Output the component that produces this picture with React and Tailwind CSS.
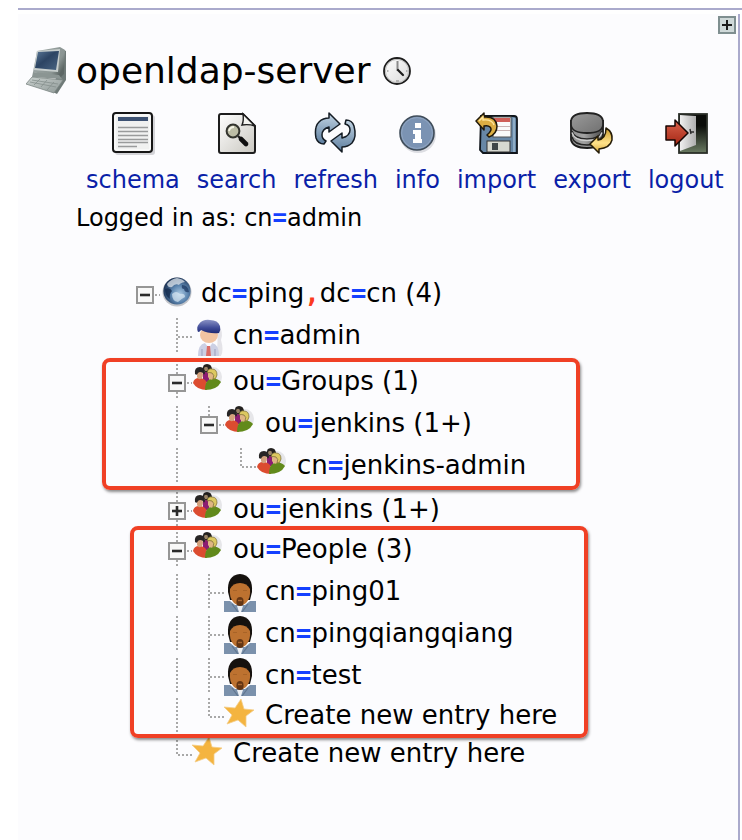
import React from "react";

const LINE = "#a8a8a8";

function ComputerIcon() {
  return (
    <svg width="44" height="50" viewBox="0 0 44 50" aria-hidden="true">
      <defs>
        <linearGradient id="pcScreen" x1="0" y1="0" x2="1" y2="1">
          <stop offset="0" stopColor="#5b7898" />
          <stop offset="0.45" stopColor="#2c4463" />
          <stop offset="1" stopColor="#4a6583" />
        </linearGradient>
        <linearGradient id="pcCase" x1="0" y1="0" x2="1" y2="0.6">
          <stop offset="0" stopColor="#a4adac" />
          <stop offset="0.8" stopColor="#8a9492" />
          <stop offset="1" stopColor="#5d6765" />
        </linearGradient>
        <linearGradient id="pcBase" x1="0" y1="0" x2="1" y2="1">
          <stop offset="0" stopColor="#c9d0ce" />
          <stop offset="1" stopColor="#909a98" />
        </linearGradient>
      </defs>
      <path d="M36 3 L40 5 L40 34 L31 48 L27 46 Z" fill="#6f7a78" />
      <path d="M11 5 L34 1 L39 4 L38 28 L34 32 L7 26 Z" fill="url(#pcCase)" />
      <path d="M11 5 L34 3 L32 26 L8 24 Z" fill="#c7cecd" />
      <path d="M12 6 L33 5 L30 24 L9 22 Z" fill="url(#pcScreen)" />
      <path d="M7 26 L33 29 L36 33 L6 31 Z" fill="#8b9593" />
      <path d="M6 31 L37 34 L28 47 L0 38 Z" fill="url(#pcBase)" stroke="#7c8684" strokeWidth="0.8" />
      <path d="M6 34 L32 38 M4 36 L30 41 M14 33 L8 39 M21 34 L15 41 M28 36 L21 44" stroke="#858f8d" strokeWidth="0.8" fill="none" />
    </svg>
  );
}

function ClockIcon() {
  return (
    <svg width="28" height="28" viewBox="0 0 28 28" className="block" aria-hidden="true">
      <defs>
        <linearGradient id="clockFace" x1="0" y1="0" x2="1" y2="1">
          <stop offset="0" stopColor="#ffffff" />
          <stop offset="1" stopColor="#d9d9d9" />
        </linearGradient>
      </defs>
      <circle cx="14" cy="14" r="13" fill="url(#clockFace)" stroke="#1d1d1d" strokeWidth="1.8" />
      <circle cx="14" cy="14" r="11.6" fill="none" stroke="#bdbdbd" strokeWidth="1" />
      <path d="M14.5 14 V4" stroke="#8b8b8b" strokeWidth="2" />
      <path d="M15 13 L20 18" stroke="#1c1c1c" strokeWidth="2.2" strokeLinecap="round" />
      <path d="M4 14h1.5 M23 14h1.5 M13 24h3" stroke="#b3b3b3" strokeWidth="2" />
    </svg>
  );
}

function SchemaIcon() {
  return (
    <svg width="44" height="44" viewBox="0 0 44 44" aria-hidden="true">
      <rect x="4" y="3" width="40" height="40" rx="3" fill="#d4d4d8" />
      <rect x="2" y="1" width="39" height="39" rx="3" fill="#f0f1f0" stroke="#161616" strokeWidth="2" />
      <rect x="4" y="3" width="35" height="35" rx="1" fill="none" stroke="#ffffff" strokeWidth="1" />
      <rect x="7" y="5" width="30" height="4" fill="#3d5273" />
      <path d="M7 15.5h30M7 19.5h30M7 23.5h30M7 27.5h30M7 30.5h30M7 34.5h19" stroke="#999b9b" strokeWidth="1.6" />
    </svg>
  );
}

function SearchIcon() {
  return (
    <svg width="44" height="44" viewBox="0 0 44 44" aria-hidden="true">
      <defs>
        <linearGradient id="paper" x1="0" y1="0" x2="1" y2="1">
          <stop offset="0" stopColor="#ffffff" />
          <stop offset="1" stopColor="#c9c7c0" />
        </linearGradient>
      </defs>
      <path d="M4 4 Q4 2 6 2 L28 2 L40 14 L40 39 Q40 41 38 41 L6 41 Q4 41 4 39 Z" fill="url(#paper)" stroke="#1d1d1d" strokeWidth="2" />
      <path d="M28 2 Q29 9 27 13 Q34 12 40 14 Z" fill="#f4f4f0" stroke="#1d1d1d" strokeWidth="1.4" />
      <path d="M23 24 L25 26" stroke="#222" strokeWidth="2.4" />
      <path d="M26 27 L31 32" stroke="#0f0f0f" strokeWidth="4.6" strokeLinecap="round" />
      <circle cx="18" cy="19" r="6.4" fill="#bcbda6" stroke="#33342e" strokeWidth="2" />
      <path d="M14 19 Q15 15 19 15" stroke="#f4f4e6" strokeWidth="1.8" fill="none" />
    </svg>
  );
}

function RefreshIcon() {
  return (
    <svg width="44" height="44" viewBox="0 0 44 44" aria-hidden="true">
      <defs>
        <linearGradient id="arrowBlue" x1="0" y1="0" x2="0" y2="1">
          <stop offset="0" stopColor="#c3d5e4" />
          <stop offset="1" stopColor="#5c7d9e" />
        </linearGradient>
      </defs>
      <g fill="url(#arrowBlue)" stroke="#141c24" strokeWidth="1.5" strokeLinejoin="round">
        <path d="M15 1 L26 12 L15 20 L15 15 Q8 17 8 23 Q8 27 12 29 L10 32 Q4 32 2 26 Q0 15 5 10 Q9 6 15 6 Z" />
        <path d="M28 40 L17 29 L28 21 L28 26 Q36 24 36 18 Q36 13 31 12 L32 8 Q38 8 40 14 Q43 25 38 31 Q34 35 28 35 Z" />
      </g>
    </svg>
  );
}

function InfoIcon() {
  return (
    <svg width="44" height="44" viewBox="0 0 44 44" aria-hidden="true">
      <circle cx="23" cy="23" r="18" fill="#dcdde2" />
      <circle cx="22" cy="21" r="17" fill="#7b93b3" stroke="#3f4c59" strokeWidth="1.6" />
      <circle cx="22" cy="21" r="15.4" fill="none" stroke="#90a5c1" strokeWidth="1" />
      <path d="M20 11h6v5h-6z M18 18h8v9h1v4h-9v-4h2v-5h-2z" fill="#fff" />
    </svg>
  );
}

function ImportIcon() {
  return (
    <svg width="44" height="44" viewBox="0 0 44 44" aria-hidden="true">
      <path d="M6 4 H39 Q42 4 42 7 V41 H8 L5 38 Z" fill="#6787a6" stroke="#10151b" strokeWidth="1.8" />
      <path d="M39 6 V40" stroke="#8fadc6" strokeWidth="2" />
      <rect x="18" y="5" width="18" height="20" fill="#fafafa" stroke="#555" strokeWidth="1" />
      <rect x="19" y="6" width="16" height="4" fill="#cf5f58" />
      <path d="M19 14.5h16M19 18.5h16" stroke="#c8b4b4" strokeWidth="1" />
      <rect x="12" y="29" width="23" height="11" fill="#d6d8d0" stroke="#333" strokeWidth="1" />
      <rect x="17" y="31" width="6" height="7" fill="#3f4648" />
      <path d="M1 9 L9 1 V5 Q21 4 22 14 Q22 22 14 25 L12 23 Q18 18 15 15 Q13 13 9 14 V18 Z" fill="#dcae43" stroke="#20190a" strokeWidth="1.5" strokeLinejoin="round" />
      <path d="M4 9 L8 5 V8 Q17 7 19 13" stroke="#ffe7a0" strokeWidth="1.4" fill="none" />
    </svg>
  );
}

function ExportIcon() {
  return (
    <svg width="44" height="44" viewBox="0 0 44 44" aria-hidden="true">
      <defs>
        <linearGradient id="drum" x1="0" y1="0" x2="1" y2="0">
          <stop offset="0" stopColor="#8f8f8f" />
          <stop offset="0.4" stopColor="#a3a3a3" />
          <stop offset="1" stopColor="#474747" />
        </linearGradient>
        <linearGradient id="drumTop" x1="0" y1="0" x2="1" y2="1">
          <stop offset="0" stopColor="#9b9b9b" />
          <stop offset="1" stopColor="#707070" />
        </linearGradient>
        <linearGradient id="gold" x1="0" y1="0" x2="0" y2="1">
          <stop offset="0" stopColor="#c99a2c" />
          <stop offset="0.6" stopColor="#ffe28a" />
          <stop offset="1" stopColor="#d9a93a" />
        </linearGradient>
      </defs>
      <path d="M1 9 V28 Q3 36 17 36 Q32 36 33 28 V9 Z" fill="url(#drum)" stroke="#1c1c1c" strokeWidth="1.8" />
      <path d="M2 19 Q4 27 17 27 Q30 27 32 19 M2 25 Q4 33 17 33 Q30 33 32 25" stroke="#262626" strokeWidth="1.4" fill="none" />
      <path d="M2 20.5 Q4 28.5 17 28.5 Q30 28.5 32 20.5" stroke="#cfcfcf" strokeWidth="1.4" fill="none" />
      <path d="M1 9 Q2 1 17 1 Q32 1 33 9 V13 Q32 21 17 21 Q2 21 1 13 Z" fill="url(#drumTop)" stroke="#222" strokeWidth="1.8" />
      <path d="M20 32 L28 24 V28 Q36 27 36 16 Q43 20 42 28 Q40 36 29 37 V41 Z" fill="url(#gold)" stroke="#251c08" strokeWidth="1.5" strokeLinejoin="round" />
    </svg>
  );
}

function LogoutIcon() {
  return (
    <svg width="44" height="44" viewBox="0 0 44 44" aria-hidden="true">
      <defs>
        <linearGradient id="dark" x1="0" y1="0" x2="0" y2="1">
          <stop offset="0.3" stopColor="#0b0d0a" />
          <stop offset="1" stopColor="#6a7b62" />
        </linearGradient>
        <linearGradient id="door" x1="0" y1="0" x2="1" y2="0">
          <stop offset="0" stopColor="#f0f0f0" />
          <stop offset="1" stopColor="#aeaeae" />
        </linearGradient>
        <linearGradient id="redArrow" x1="0" y1="0" x2="0" y2="1">
          <stop offset="0" stopColor="#d9624c" />
          <stop offset="1" stopColor="#a32513" />
        </linearGradient>
      </defs>
      <rect x="15" y="2" width="28" height="39" fill="url(#dark)" stroke="#2b2f29" strokeWidth="1.8" />
      <path d="M16 3 L32 4 V33 L16 39 Z" fill="url(#door)" />
      <path d="M26 17 l1 5 M26 20 h4" stroke="#2c2c2c" strokeWidth="1.4" fill="none" />
      <path d="M2 14 H11 V8 L24 21 L11 34 V28 H2 Z" fill="url(#redArrow)" stroke="#160503" strokeWidth="1.5" strokeLinejoin="round" />
    </svg>
  );
}

function GlobeIcon() {
  return (
    <svg width="32" height="36" viewBox="0 0 32 36" className="block" aria-hidden="true">
      <defs>
        <radialGradient id="earth" cx="0.6" cy="0.6" r="0.62">
          <stop offset="0" stopColor="#a9c8e2" />
          <stop offset="0.5" stopColor="#5b84ae" />
          <stop offset="1" stopColor="#1c3355" />
        </radialGradient>
      </defs>
      <circle cx="17" cy="16" r="14.5" fill="#c3c5ca" />
      <circle cx="17" cy="15" r="13.6" fill="url(#earth)" />
      <path d="M7 8 Q11 3 17 2 Q23 3 25 6 Q20 7 19 9 Q15 7 12 11 Q8 12 7 8 Z" fill="#dfe6ec" opacity="0.75" />
      <path d="M5 13 Q10 11 12 15 Q9 18 10 23 Q5 20 5 13 Z" fill="#142b4e" opacity="0.8" />
      <path d="M22 9 Q28 9 29 16 Q25 17 24 13 Q21 13 22 9 Z" fill="#1d3a63" opacity="0.75" />
      <path d="M12 18 Q16 14 20 18 Q25 17 25 21 Q21 23 18 26 Q12 25 12 18 Z" fill="#e2eef7" opacity="0.65" />
    </svg>
  );
}

function UserIcon() {
  return (
    <svg width="32" height="40" viewBox="0 0 32 40" className="block" aria-hidden="true">
      <defs>
        <linearGradient id="hair" x1="0" y1="0" x2="0" y2="1">
          <stop offset="0" stopColor="#8a92c4" />
          <stop offset="0.6" stopColor="#3f4b98" />
          <stop offset="1" stopColor="#202a74" />
        </linearGradient>
      </defs>
      <path d="M26 6 Q32 14 29 22 Q32 32 29 38 H25 Z" fill="#e4e3e8" />
      <path d="M6 38 Q6 26 13 25 H20 Q27 26 27 38 Z" fill="#ccd0e4" />
      <path d="M10 38 V31 M23 38 V31" stroke="#a3a8c6" strokeWidth="1.2" />
      <path d="M12 24 H21 L17 30 Z" fill="#fbfbff" />
      <path d="M15 28 H18 L19 38 H14 Z" fill="#dc6c66" />
      <ellipse cx="17" cy="17" rx="9" ry="8" fill="#f2c4a2" />
      <path d="M6 14 Q4 9 7 6 Q11 1 18 2 Q26 2 28 8 Q29 12 27 15 Q17 16 9 12 Q8 14 6 14 Z" fill="url(#hair)" />
    </svg>
  );
}

function PeopleIcon() {
  return (
    <svg width="32" height="36" viewBox="0 0 32 36" className="block" aria-hidden="true">
      <ellipse cx="21" cy="13" rx="9" ry="10" fill="#e6e6e9" />
      <path d="M11 6 Q10 0 15 0 Q20 0 20 6 L17 9 H14 Z" fill="#23211f" />
      <ellipse cx="14" cy="5" rx="2" ry="2.2" fill="#9a8468" />
      <path d="M11 8 H17 V18 H11 Z" fill="#8b1d72" />
      <path d="M1 19 Q2 14 7 14 Q13 14 15 19 V26 Q5 26 1 19 Z" fill="#dc4c30" />
      <path d="M13 26 Q13 17 18 15 Q25 13 29 18 Q25 26 13 26 Z" fill="#628a1b" />
      <path d="M5 8 Q6 5 10 7 Q12 11 10 14 Q7 17 5 13 Z" fill="#d3a27c" />
      <path d="M3 10 Q2 3 8 3 Q13 3 13 9 Q12 12 11 9 Q8 7 6 9 Q5 12 3 10 Z" fill="#272525" />
      <path d="M16 9 Q17 6 21 8 Q23 12 21 15 Q18 17 16 13 Z" fill="#dfb583" />
      <path d="M15 9 Q16 4 20 5 Q25 5 25 11 Q24 16 21 15 Q23 11 20 9 Q17 8 15 9 Z" fill="#dcc860" stroke="#74672e" strokeWidth="0.7" />
    </svg>
  );
}

function PhotoIcon() {
  return (
    <svg width="32" height="38" viewBox="0 0 32 38" className="block" aria-hidden="true">
      <path d="M0 38 V27 H6 L11 31 H21 L26 27 H32 V38 Z" fill="#7b91ac" />
      <path d="M8 30 L14 38 M24 30 L18 38" stroke="#60768f" strokeWidth="1.2" />
      <path d="M13 32 H19 L17 38 H15 Z" fill="#edf0f4" />
      <path d="M4 18 Q3 1 16 0 Q29 1 28 18 L26 26 H6 Z" fill="#15110e" />
      <path d="M6 15 Q9 9 16 9 Q23 9 26 15 Q27 24 22 29 Q16 34 10 29 Q5 24 6 15 Z" fill="#bd7230" />
      <path d="M13 31 Q11 23 16 23 Q21 23 19 31 Q16 33 13 31 Z" fill="#633513" />
      <path d="M14 26.5 H18" stroke="#a96530" strokeWidth="1.4" />
      <path d="M9 16.5 H13 M19 16.5 H23" stroke="#a86327" strokeWidth="1" />
    </svg>
  );
}

function StarIcon() {
  return (
    <svg width="32" height="36" viewBox="0 0 32 36" className="block" aria-hidden="true">
      <path d="M17 1 L20 11 L30 12 L22 18 L22 29 L14 22 L3 26 L8 17 L0 9 L11 10 Z" fill="#f4b440" stroke="#f4cd86" strokeWidth="0.8" />
    </svg>
  );
}

const ICONS = { globe: GlobeIcon, user: UserIcon, people: PeopleIcon, photo: PhotoIcon, star: StarIcon };

/* Dotted guide lines that join the entries of the tree. */
function Guide({ kind }) {
  return (
    <svg width="32" height="36" viewBox="0 0 32 36" className="block shrink-0" aria-hidden="true">
      <g stroke={LINE} strokeWidth="2" strokeDasharray="2 2" fill="none">
        {(kind === "line" || kind === "tee") && <path d="M17 0 V35" />}
        {kind === "elbow" && <path d="M17 0 V20" />}
        {(kind === "tee" || kind === "elbow") && <path d="M18 19 H32" />}
      </g>
    </svg>
  );
}

function Toggle({ open, root, last, label }) {
  return (
    <button type="button" aria-expanded={open} aria-label={label} className="h-9 w-8 shrink-0 cursor-pointer">
      <svg width="32" height="36" viewBox="0 0 32 36" className="block">
        <g stroke={LINE} strokeWidth="2" strokeDasharray="2 2">
          {!root && <path d={last ? "M17 0 V10" : "M17 0 V35"} />}
          <path d="M27 19 H32" />
        </g>
        <rect x="9" y="11" width="16" height="16" fill="#f8f8f8" stroke="#969696" strokeWidth="2" />
        <path d="M12 19 H22" stroke="#2a2a2a" strokeWidth="2.6" />
        {!open && <path d="M17 14 V24" stroke="#2a2a2a" strokeWidth="2.6" />}
      </svg>
    </button>
  );
}

/* Colours the "=" and "," separators of a distinguished name. */
function Dn({ text }) {
  return text.split(/([=,])/).map((part, i) => {
    if (part === "=") return <b key={i} className="font-['DejaVu_Sans_Mono',monospace] text-[#1440ff]">=</b>;
    if (part === ",") return <b key={i} className="font-['DejaVu_Sans_Mono',monospace] text-[#fb3a20]">,</b>;
    return part;
  });
}

function Row({ lines = [], toggle, icon, text, height = "h-[42px]" }) {
  const Icon = ICONS[icon];
  return (
    <div className={`flex items-start ${height}`}>
      {lines.map((kind, i) => <Guide key={i} kind={kind} />)}
      {toggle && <Toggle {...toggle} label={`Toggle ${text}`} />}
      <a href="#entry" className="flex items-start gap-[9px] whitespace-nowrap text-[26px] leading-[34px] text-black">
        <span className="w-8 shrink-0"><Icon /></span>
        <span><Dn text={text} /></span>
      </a>
    </div>
  );
}

const TOOLS = [
  ["schema", SchemaIcon],
  ["search", SearchIcon],
  ["refresh", RefreshIcon],
  ["info", InfoIcon],
  ["import", ImportIcon],
  ["export", ExportIcon],
  ["logout", LogoutIcon],
];

/* Red frame drawn over a part of the tree. */
function Mark({ place }) {
  return (
    <div className={`pointer-events-none absolute rounded-lg border-4 border-[#f04025] shadow-[1px_2px_3px_rgba(0,0,0,0.45)] ${place}`} />
  );
}

export default function App() {
  return (
    <div className="flex min-h-screen flex-col bg-white pl-[18px] pt-2 font-['DejaVu_Sans',Verdana,sans-serif] text-black">
      <div className="h-0.5 bg-[#aaaacc]" />
      <main className="mr-0.5 mt-1 grow border-r-2 border-[#aaaacc] bg-[#fcfcfe]">
        <div className="flex justify-end pr-0.5 pt-0.5">
          <button type="button" aria-label="Expand panel" className="h-[18px] w-[18px]">
            <svg width="18" height="18" viewBox="0 0 18 18" className="block">
              <rect x="1" y="1" width="16" height="16" fill="#cfd9d9" stroke="#7f8f90" strokeWidth="2" />
              <path d="M4 9h10M9 4v10" stroke="#1c1c1c" strokeWidth="2" />
            </svg>
          </button>
        </div>

        <header className="mt-3 flex items-center pl-2">
          <ComputerIcon />
          <h1 className="ml-1.5 text-4xl leading-[50px]">openldap-server</h1>
          <button type="button" aria-label="Session timeout" className="ml-3"><ClockIcon /></button>
        </header>

        <nav className="mt-4 flex gap-[17px] pl-[68px]">
          {TOOLS.map(([name, Icon]) => (
            <a key={name} href={`#${name}`} className="flex flex-col items-center gap-2 text-2xl leading-8 text-[#0a1fa8]">
              <Icon />
              <span>{name}</span>
            </a>
          ))}
        </nav>

        <p className="mt-1.5 pl-[58px] text-2xl leading-8"><Dn text="Logged in as: cn=admin" /></p>

        <ul className="mt-[42px] pl-[110px]">
          <li>
            <Row toggle={{ open: true, root: true }} icon="globe" text="dc=ping,dc=cn (4)" />
            <ul>
              <li className="pl-8">
                <Row lines={["tee"]} icon="user" text="cn=admin" height="h-[46px]" />
              </li>
              <li className="relative pl-8">
                <Row toggle={{ open: true }} icon="people" text="ou=Groups (1)" />
                <Row lines={["line"]} toggle={{ open: true, last: true }} icon="people" text="ou=jenkins (1+)" />
                <Row lines={["line", "blank", "elbow"]} icon="people" text="cn=jenkins-admin" height="h-[44px]" />
                <Mark place="-left-[26px] -top-1.5 bottom-0.5 w-[478px]" />
              </li>
              <li className="pl-8">
                <Row toggle={{ open: false }} icon="people" text="ou=jenkins (1+)" height="h-10" />
              </li>
              <li className="relative pl-8">
                <Row toggle={{ open: true }} icon="people" text="ou=People (3)" />
                <Row lines={["line", "tee"]} icon="photo" text="cn=ping01" />
                <Row lines={["line", "tee"]} icon="photo" text="cn=pingqiangqiang" />
                <Row lines={["line", "tee"]} icon="photo" text="cn=test" height="h-10" />
                <Row lines={["line", "elbow"]} icon="star" text="Create new entry here" height="h-[38px]" />
                <Mark place="-bottom-0.5 -top-1.5 left-0.5 w-[458px]" />
              </li>
              <li className="pl-8">
                <Row lines={["elbow"]} icon="star" text="Create new entry here" />
              </li>
            </ul>
          </li>
        </ul>
      </main>
    </div>
  );
}
